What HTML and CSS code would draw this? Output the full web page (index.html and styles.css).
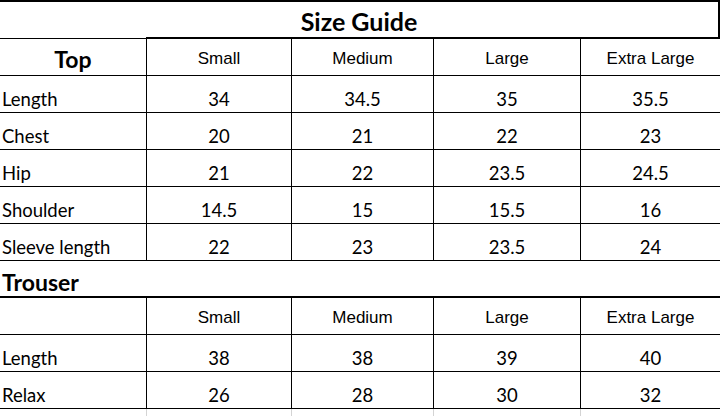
FILE: index.html
```html
<!DOCTYPE html>
<html lang="en">
<head>
<meta charset="utf-8">
<title>Size Guide</title>
<link rel="stylesheet" href="styles.css">
</head>
<body>
<div class="sheet">
  <div class="title-row">
    <div class="title-a"></div>
    <div class="title-b"></div>
    <h1 class="title-text">Size Guide</h1>
  </div>

  <div class="row head">
    <div class="cell group">Top</div>
    <div class="cell">Small</div>
    <div class="cell">Medium</div>
    <div class="cell">Large</div>
    <div class="cell">Extra Large</div>
  </div>
  <div class="row">
    <div class="cell label">Length</div>
    <div class="cell">34</div>
    <div class="cell">34.5</div>
    <div class="cell">35</div>
    <div class="cell">35.5</div>
  </div>
  <div class="row">
    <div class="cell label">Chest</div>
    <div class="cell">20</div>
    <div class="cell">21</div>
    <div class="cell">22</div>
    <div class="cell">23</div>
  </div>
  <div class="row">
    <div class="cell label">Hip</div>
    <div class="cell">21</div>
    <div class="cell">22</div>
    <div class="cell">23.5</div>
    <div class="cell">24.5</div>
  </div>
  <div class="row">
    <div class="cell label">Shoulder</div>
    <div class="cell">14.5</div>
    <div class="cell">15</div>
    <div class="cell">15.5</div>
    <div class="cell">16</div>
  </div>
  <div class="row">
    <div class="cell label">Sleeve length</div>
    <div class="cell">22</div>
    <div class="cell">23</div>
    <div class="cell">23.5</div>
    <div class="cell">24</div>
  </div>

  <div class="section-row">Trouser</div>

  <div class="row head">
    <div class="cell label"></div>
    <div class="cell">Small</div>
    <div class="cell">Medium</div>
    <div class="cell">Large</div>
    <div class="cell">Extra Large</div>
  </div>
  <div class="row">
    <div class="cell label">Length</div>
    <div class="cell">38</div>
    <div class="cell">38</div>
    <div class="cell">39</div>
    <div class="cell">40</div>
  </div>
  <div class="row">
    <div class="cell label">Relax</div>
    <div class="cell">26</div>
    <div class="cell">28</div>
    <div class="cell">30</div>
    <div class="cell">32</div>
  </div>
  <div class="row tail">
    <div class="cell"></div>
    <div class="cell"></div>
    <div class="cell"></div>
    <div class="cell"></div>
    <div class="cell"></div>
  </div>
</div>
</body>
</html>
```

FILE: styles.css
```css
* {
  box-sizing: border-box;
  margin: 0;
  padding: 0;
}

html, body {
  background: #ffffff;
}

body {
  margin: 0;
  font-family: Lato, "Liberation Sans", sans-serif;
  color: #000000;
}

.sheet {
  width: 720px;
  overflow: hidden;
}

.title-row {
  display: grid;
  grid-template-columns: 146px 1fr;
  height: 39px;
  border-top: 2px solid #000;
  border-right: 2px solid #000;
}

.title-a {
  grid-area: 1 / 1;
  border-bottom: 1px solid #000;
}

.title-b {
  grid-area: 1 / 2;
  border-bottom: 2px solid #000;
}

.title-text {
  grid-area: 1 / 1 / 2 / 3;
  align-self: end;
  justify-self: center;
  font-size: 25px;
  font-weight: 700;
  line-height: 29px;
  padding-bottom: 3px;
}

.row {
  display: grid;
  grid-template-columns: 146px 145px 142px 147px 140px;
  height: 37px;
  border-bottom: 1px solid #000;
}

.cell {
  display: flex;
  align-items: flex-end;
  justify-content: center;
  font-size: 18.5px;
  line-height: 22px;
  padding-bottom: 2px;
  white-space: nowrap;
}

.cell + .cell {
  border-left: 1px solid #000;
}

.label {
  justify-content: flex-start;
  padding-left: 2px;
}

.head .cell {
  font-family: "Liberation Sans", Arial, sans-serif;
  font-size: 17px;
  line-height: 20px;
  padding-bottom: 6px;
}

.head .group {
  font-family: Lato, "Liberation Sans", sans-serif;
  font-weight: 700;
  font-size: 23px;
  line-height: 27px;
  padding-bottom: 2px;
}

.section-row {
  height: 37px;
  border-bottom: 2px solid #000;
  display: flex;
  align-items: flex-end;
  padding-left: 2px;
  padding-bottom: 0;
  font-size: 23px;
  font-weight: 700;
  line-height: 27px;
}

.row.tail {
  height: 8px;
  border-bottom: none;
}

.tail .cell + .cell {
  border-left-color: #d4d4d4;
}
```
